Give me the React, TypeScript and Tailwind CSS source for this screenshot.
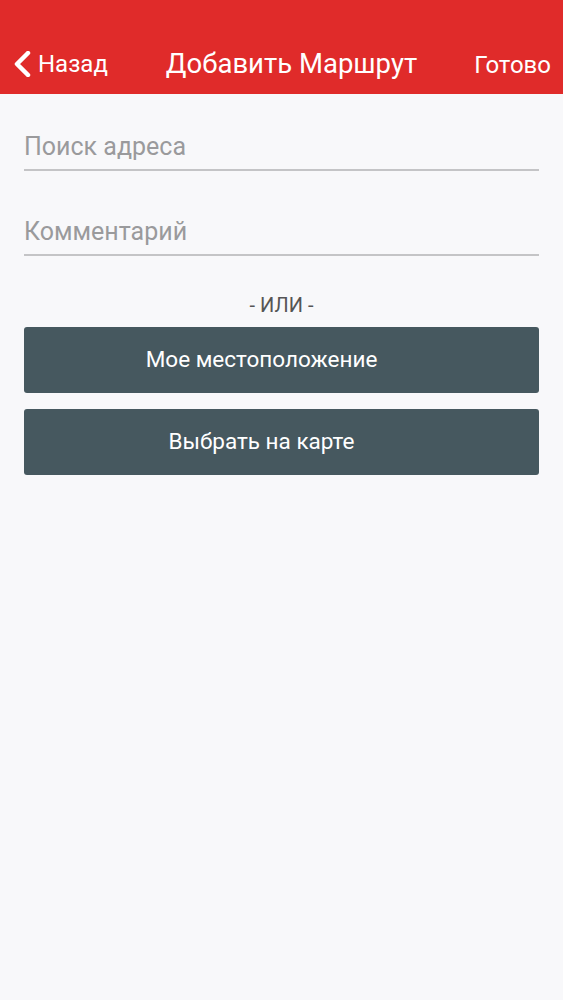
export default function App() {
  return (
    <div className="min-h-[1000px] w-full bg-[#f8f8fa] font-['Roboto','Liberation_Sans',sans-serif]">
      {/* шапка */}
      <header className="flex h-[94px] items-end bg-[#e02b2a] pb-[17px] text-white">
        <button className="flex w-[120px] items-center pl-[12px]">
          <svg width="20" height="26" viewBox="0 0 20 26" className="mr-[6px]">
            <path d="M16 2 L5 13 L16 24" fill="none" stroke="white" strokeWidth="4.5" strokeLinecap="round" strokeLinejoin="round" />
          </svg>
          <span className="text-[24px] leading-none">Назад</span>
        </button>
        <h1 className="flex-1 text-center text-[27.5px] leading-none">Добавить Маршрут</h1>
        <button className="w-[100px] pr-[12px] text-right text-[24px] leading-none">Готово</button>
      </header>

      <div className="flex flex-col px-[24px] pt-[31px]">
        <input
          className="h-[46px] border-b-2 border-[#c4c4c6] bg-transparent pb-[2px] text-[25px] text-[#333] outline-none placeholder:text-[#9a9a9c]"
          placeholder="Поиск адреса"
        />
        <input
          className="mt-[39px] h-[46px] border-b-2 border-[#c4c4c6] bg-transparent pb-[2px] text-[25px] text-[#333] outline-none placeholder:text-[#9a9a9c]"
          placeholder="Комментарий"
        />
        <div className="mt-[39px] text-center text-[20px] leading-none text-[#555]">- ИЛИ -</div>
        <button className="mt-[12px] h-[66px] rounded-[3px] bg-[#46585f] pr-[40px] text-[22.5px] text-white">
          Мое местоположение
        </button>
        <button className="mt-[16px] h-[66px] rounded-[3px] bg-[#46585f] pr-[40px] text-[22.5px] text-white">
          Выбрать на карте
        </button>
      </div>
    </div>
  );
}
